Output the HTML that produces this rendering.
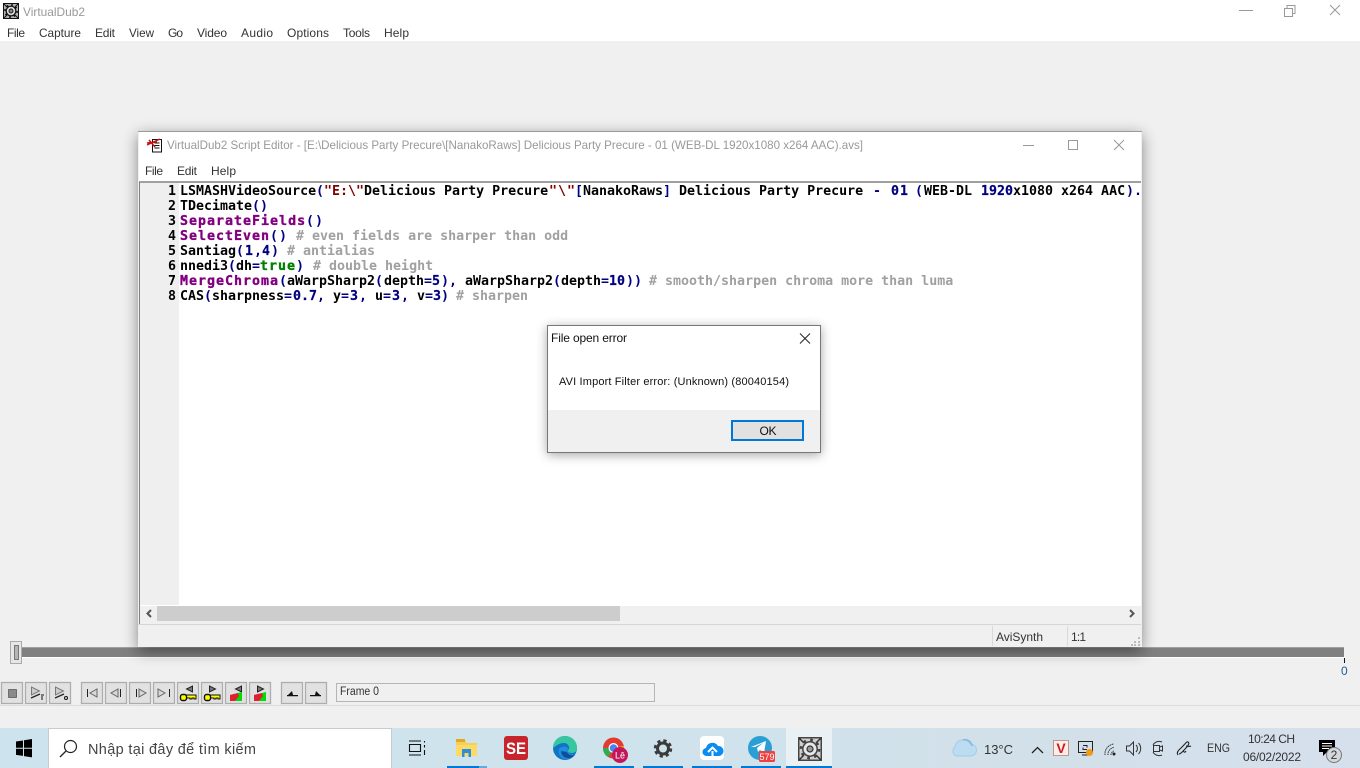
<!DOCTYPE html>
<html><head><meta charset="utf-8"><title>VirtualDub2</title>
<style>
html,body{margin:0;padding:0;width:1360px;height:768px;overflow:hidden;background:#f0f0f0}
.r{position:absolute;display:block}
svg{position:absolute;left:0;top:0}
text{font-family:"Liberation Sans","Noto Sans CJK SC",sans-serif;font-size:12px;fill:#333;white-space:pre}
.ti{fill:#999}
text.c{font-family:"DejaVu Sans Mono",monospace;font-size:13.3px;font-weight:bold;fill:#000}
.ln{font:bold 13.3px "DejaVu Sans Mono",monospace;fill:#000}
.n{fill:#000080}.s{fill:#800000}.g{fill:#a0a0a0}.t{fill:#008000}
.p{fill:#800080;stroke:#800080;stroke-width:.35px;letter-spacing:1px}
.d{fill:#000080;stroke:#000080;stroke-width:.2px}
.btn{fill:#e1e1e1;stroke:#adadad;stroke-width:1.3}
</style></head><body>
<div class="r" style="left:0;top:0;width:1360px;height:41px;background:#fff"></div>
<div class="r" style="left:22px;top:647px;width:1322px;height:10px;background:#808080;border-top:1px solid #a0a0a0;box-sizing:border-box"></div>
<div class="r" style="left:10px;top:657px;width:1335px;height:1px;background:#fff"></div>
<div class="r" style="left:138px;top:131px;width:1004px;height:516px;background:#f0f0f0;box-shadow:0 4px 14px rgba(0,0,0,.45)"></div>
<div class="r" style="left:139px;top:132px;width:1002px;height:49px;background:#fff"></div>
<div class="r" style="left:138px;top:131px;width:1004px;height:1px;background:#9a9a9a"></div>
<div class="r" style="left:139px;top:181px;width:1002px;height:2px;background:#a0a0a0"></div>
<div class="r" style="left:139px;top:182px;width:1px;height:442px;background:#808080"></div>
<div class="r" style="left:140px;top:183px;width:1001px;height:423px;background:#fff"></div>
<div class="r" style="left:140px;top:183px;width:39px;height:422px;background:#efefef"></div>
<div class="r" style="left:140px;top:606px;width:1001px;height:16px;background:#f0f0f0"></div>
<div class="r" style="left:157px;top:606px;width:463px;height:15px;background:#cdcdcd"></div>
<div class="r" style="left:138px;top:624px;width:1003px;height:1px;background:#d6d6d6"></div>
<div class="r" style="left:992px;top:626px;width:1px;height:20px;background:#d9d9d9"></div>
<div class="r" style="left:1067px;top:626px;width:1px;height:20px;background:#d9d9d9"></div>
<div class="r" style="left:0;top:705px;width:1360px;height:1px;background:#dcdcdc"></div>
<div class="r" style="left:547px;top:325px;width:274px;height:128px;box-sizing:border-box;border:1px solid #777;background:#fff;box-shadow:0 2px 10px rgba(0,0,0,.35)"></div>
<div class="r" style="left:548px;top:410px;width:272px;height:42px;background:#f0f0f0"></div>
<div class="r" style="left:731px;top:420px;width:73px;height:21px;box-sizing:border-box;border:2px solid #0078d7;background:#e1e1e1"></div>
<div class="r" style="left:0;top:728px;width:1360px;height:40px;background:linear-gradient(90deg,#cde4ee 0,#cfe3ec 45%,#d2e0ea 75%,#d6e0ec 100%)"></div>
<div class="r" style="left:49px;top:729px;width:342px;height:39px;background:#fff;box-shadow:0 0 0 1px #c4ccd2"></div>
<div class="r" style="left:786px;top:728px;width:46px;height:40px;background:#e9f1f5"></div>
<div class="r" style="left:447px;top:766px;width:32px;height:2px;background:#0078d7"></div>
<div class="r" style="left:479px;top:766px;width:8px;height:2px;background:#6aa7da"></div>
<div class="r" style="left:594px;top:766px;width:40px;height:2px;background:#0078d7"></div>
<div class="r" style="left:643px;top:766px;width:40px;height:2px;background:#0078d7"></div>
<div class="r" style="left:692px;top:766px;width:40px;height:2px;background:#0078d7"></div>
<div class="r" style="left:741px;top:766px;width:40px;height:2px;background:#0078d7"></div>
<div class="r" style="left:786px;top:766px;width:46px;height:2px;background:#0078d7"></div>

<svg width="1360" height="768" viewBox="0 0 1360 768">
<defs>
<clipPath id="ed"><rect x="180" y="183" width="961" height="120"/></clipPath>
<g id="gear"><rect x=".5" y=".5" width="15" height="15" fill="#cfcfcf" stroke="#444" stroke-width="1"/><path d="M1 1l3 3M15 1l-3 3M1 15l3-3M15 15l-3-3" stroke="#333" fill="none"/><circle cx="8" cy="8" r="6" fill="none" stroke="#444" stroke-width="1.800" stroke-dasharray="1.800 2.900"/><circle cx="8" cy="8" r="4.800" fill="#e8e8e8" stroke="#444" stroke-width="1"/><circle cx="8" cy="8" r="2" fill="#999" stroke="#333" stroke-width=".8"/></g>
<g id="gearb"><rect x=".5" y=".5" width="15" height="15" fill="#b0b0b0" stroke="#111" stroke-width="1"/><path d="M1 1l3 3M15 1l-3 3M1 15l3-3M15 15l-3-3" stroke="#111" fill="none"/><circle cx="8" cy="8" r="6" fill="none" stroke="#111" stroke-width="1.800" stroke-dasharray="1.800 2.900"/><circle cx="8" cy="8" r="4.800" fill="#ddd" stroke="#111" stroke-width="1.200"/><circle cx="8" cy="8" r="2" fill="#888" stroke="#111" stroke-width=".9"/></g>
</defs>

<!-- main titlebar -->
<use href="#gearb" x="3" y="3"/>
<text x="23" y="16" class="ti" textLength="62" lengthAdjust="spacingAndGlyphs">VirtualDub2</text>
<path d="M1239 10.500h14" stroke="#999" fill="none"/>
<path d="M1284.500 8.500h8v8h-8zM1287 8.500v-3h8v8h-2.500" stroke="#999" fill="none"/>
<path d="M1330 5l10 10M1340 5l-10 10" stroke="#999" fill="none"/>
<text x="7" y="37" textLength="18">File</text>
<text x="39" y="37" textLength="42" lengthAdjust="spacingAndGlyphs">Capture</text>
<text x="95" y="37" textLength="20">Edit</text>
<text x="129" y="37" textLength="25" lengthAdjust="spacingAndGlyphs">View</text>
<text x="168" y="37" textLength="15">Go</text>
<text x="197" y="37" textLength="30">Video</text>
<text x="241" y="37" textLength="32">Audio</text>
<text x="287" y="37" textLength="42">Options</text>
<text x="343" y="37" textLength="27">Tools</text>
<text x="384" y="37" textLength="25">Help</text>

<!-- script editor titlebar -->
<path d="M152.500 139.500h9v12.500h-9z" fill="#fff" stroke="#111"/><path d="M154.500 143h5M154.500 145.500h5M154.500 148h5" stroke="#111"/>
<path d="M147 145L160 139M149 140l6 7M147 143l10-1" stroke="#c81010" stroke-width="1.400" fill="none"/>
<text x="167" y="149" class="ti" textLength="696" lengthAdjust="spacingAndGlyphs">VirtualDub2 Script Editor - [E:\Delicious Party Precure\[NanakoRaws] Delicious Party Precure - 01 (WEB-DL 1920x1080 x264 AAC).avs]</text>
<path d="M1023 145.500h11" stroke="#999" fill="none"/>
<rect x="1068.500" y="140.500" width="9" height="9" fill="none" stroke="#999"/>
<path d="M1114 140l10 10M1124 140l-10 10" stroke="#999" fill="none"/>
<text x="145" y="175" textLength="18">File</text>
<text x="177" y="175" textLength="20">Edit</text>
<text x="211" y="175" textLength="25">Help</text>

<!-- code -->
<text text-anchor="end" x="176" y="195" class="ln">1</text>
<text text-anchor="end" x="176" y="210" class="ln">2</text>
<text text-anchor="end" x="176" y="225" class="ln">3</text>
<text text-anchor="end" x="176" y="240" class="ln">4</text>
<text text-anchor="end" x="176" y="255" class="ln">5</text>
<text text-anchor="end" x="176" y="270" class="ln">6</text>
<text text-anchor="end" x="176" y="285" class="ln">7</text>
<text text-anchor="end" x="176" y="300" class="ln">8</text>
<g clip-path="url(#ed)">
<text y="195" class="c"><tspan x="180">LSMASHVideoSource</tspan><tspan x="316" class="n">(</tspan><tspan x="324" class="s">"E:\"</tspan><tspan x="364">Delicious Party Precure</tspan><tspan x="549" class="s" letter-spacing="1">"\"</tspan><tspan x="575" class="n">[</tspan><tspan x="583">NanakoRaws</tspan><tspan x="663" class="n">]</tspan><tspan x="679">Delicious Party Precure</tspan><tspan x="873" class="n">-</tspan><tspan x="891" class="d" letter-spacing="1">01</tspan><tspan x="915" class="n">(</tspan><tspan x="924">WEB-DL</tspan><tspan x="981" class="d">1920</tspan><tspan x="1013">x1080 x264 AAC</tspan><tspan x="1126" class="n">).</tspan></text>
<text y="210" class="c"><tspan x="180">TDecimate</tspan><tspan x="252" class="n">()</tspan></text>
<text y="225" class="c"><tspan x="180" class="p">SeparateFields</tspan><tspan x="306" class="n" letter-spacing="1">()</tspan></text>
<text y="240" class="c"><tspan x="180" class="p">SelectEven</tspan><tspan x="270" class="n" letter-spacing="1">()</tspan><tspan x="296" class="g"># even fields are sharper than odd</tspan></text>
<text y="255" class="c"><tspan x="180">Santiag</tspan><tspan x="236" class="n">(</tspan><tspan x="245" class="d">1</tspan><tspan x="254" class="n">,</tspan><tspan x="262" class="d">4</tspan><tspan x="271" class="n">)</tspan><tspan x="287" class="g"># antialias</tspan></text>
<text y="270" class="c"><tspan x="180">nnedi3</tspan><tspan x="228" class="n">(</tspan><tspan x="236">dh</tspan><tspan x="252" class="n">=</tspan><tspan x="260" class="t" style="stroke:#008000;stroke-width:.35px" letter-spacing="1">true</tspan><tspan x="296" class="n">)</tspan><tspan x="313" class="g"># double height</tspan></text>
<text y="285" class="c"><tspan x="180" class="p">MergeChroma</tspan><tspan x="279" class="n">(</tspan><tspan x="287">aWarpSharp2</tspan><tspan x="375" class="n">(</tspan><tspan x="384">depth</tspan><tspan x="424" class="n">=</tspan><tspan x="432" class="d">5</tspan><tspan x="441" class="n">),</tspan><tspan x="465">aWarpSharp2</tspan><tspan x="553" class="n">(</tspan><tspan x="561">depth</tspan><tspan x="601" class="n">=</tspan><tspan x="609" class="d">10</tspan><tspan x="626" class="n">))</tspan><tspan x="649" class="g"># smooth/sharpen chroma more than luma</tspan></text>
<text y="300" class="c"><tspan x="180">CAS</tspan><tspan x="204" class="n">(</tspan><tspan x="212">sharpness</tspan><tspan x="284" class="n">=</tspan><tspan x="293" class="d">0.7</tspan><tspan x="317" class="n">,</tspan><tspan x="333">y</tspan><tspan x="341" class="n">=</tspan><tspan x="350" class="d">3</tspan><tspan x="359" class="n">,</tspan><tspan x="375">u</tspan><tspan x="383" class="n">=</tspan><tspan x="392" class="d">3</tspan><tspan x="401" class="n">,</tspan><tspan x="417">v</tspan><tspan x="425" class="n">=</tspan><tspan x="433" class="d">3</tspan><tspan x="441" class="n">)</tspan><tspan x="456" class="g"># sharpen</tspan></text>
</g>

<!-- scroll arrows, status -->
<path d="M151 610l-3.500 3.500 3.500 3.500" fill="none" stroke="#555" stroke-width="2"/>
<path d="M1130 610l3.500 3.500-3.500 3.500" fill="none" stroke="#555" stroke-width="2"/>
<text x="996" y="641" textLength="47">AviSynth</text>
<text x="1071" y="641" textLength="15">1:1</text>
<path d="M1138 637h2v2h-2zM1134 641h2v2h-2zM1138 641h2v2h-2zM1131 644h2v2h-2zM1134 644h2v2h-2zM1138 644h2v2h-2z" fill="#bbb"/>

<!-- dialog -->
<text x="551" y="342" style="fill:#111" textLength="76">File open error</text>
<path d="M800 333.500l10 10M810 333.500l-10 10" stroke="#222" fill="none"/>
<text x="559" y="385" style="fill:#111;font-size:11px" textLength="230">AVI Import Filter error: (Unknown) (80040154)</text>
<text x="759.500" y="435" style="fill:#111" textLength="17">OK</text>

<!-- slider -->
<rect x="10.500" y="641.500" width="11" height="22" fill="#e6e6e6" stroke="#aaa"/>
<rect x="14.500" y="645.500" width="4" height="14" fill="#b5b5b5" stroke="#777"/>
<path d="M1344.500 658v5" stroke="#111"/>
<text x="1341" y="675" textLength="7" style="fill:#1c5f9a">0</text>

<!-- toolbar -->
<g class="btn">
<rect x="1.500" y="682.500" width="21" height="21"/><rect x="25.500" y="682.500" width="21" height="21"/><rect x="49.500" y="682.500" width="21" height="21"/>
<rect x="81.500" y="682.500" width="21" height="21"/><rect x="105.500" y="682.500" width="21" height="21"/><rect x="129.500" y="682.500" width="21" height="21"/><rect x="153.500" y="682.500" width="21" height="21"/>
<rect x="177.500" y="682.500" width="21" height="21"/><rect x="201.500" y="682.500" width="21" height="21"/><rect x="225.500" y="682.500" width="21" height="21"/><rect x="249.500" y="682.500" width="21" height="21"/>
<rect x="281.500" y="682.500" width="21" height="21"/><rect x="305.500" y="682.500" width="21" height="21"/>
</g>
<rect x="8.500" y="689.500" width="8" height="8" fill="#8a8a8a" stroke="#222" stroke-dasharray="1 1"/>
<path d="M31.500 687v8l8-4z" fill="#ccc" stroke="#777"/><path d="M31 698l9-4" stroke="#222" stroke-width="1.300"/><path d="M42 696v4M41 695h3" stroke="#111"/>
<path d="M55.500 687v8l8-4z" fill="#ccc" stroke="#777"/><path d="M55 698l9-4" stroke="#222" stroke-width="1.300"/><circle cx="66" cy="698" r="1.500" fill="none" stroke="#111"/>
<path d="M87.500 689v8" stroke="#222" fill="none"/><path d="M97 689v8l-7-4z" fill="#d8d8d8" stroke="#666"/>
<path d="M118 689v8l-7-4z" fill="#d8d8d8" stroke="#666"/><path d="M120.500 689v8" stroke="#222"/>
<path d="M136.500 689v8" stroke="#222"/><path d="M139 689v8l7-4z" fill="#d8d8d8" stroke="#666"/>
<path d="M158 689v8l7-4z" fill="#d8d8d8" stroke="#666"/><path d="M169.500 689v8" stroke="#222"/>
<!-- key buttons -->
<path d="M192.500 686v6l-6-3z" fill="#777" stroke="#222"/>
<path d="M184 695h12v4h-2v-1h-2v1h-2v-1h-5z" fill="#ff0" stroke="#111"/><rect x="180.500" y="694.500" width="6" height="6" rx="2" fill="#ff0" stroke="#111" stroke-width="1.400"/>
<path d="M209.500 686v6l6-3z" fill="#777" stroke="#222"/>
<path d="M208 695h12v4h-2v-1h-2v1h-2v-1h-5z" fill="#ff0" stroke="#111"/><rect x="204.500" y="694.500" width="6" height="6" rx="2" fill="#ff0" stroke="#111" stroke-width="1.400"/>
<path d="M241.500 686v6l-6-3z" fill="#777" stroke="#222"/><path d="M230 701v-6l12-3v9z" fill="#0d0"/><path d="M230 701v-6l8-2 1 3-4 5z" fill="#e02030"/>
<path d="M257.500 686v6l6-3z" fill="#777" stroke="#222"/><path d="M254 701v-6l12-3v9z" fill="#0d0"/><path d="M254 701v-6l8-2 1 3-4 5z" fill="#e02030"/>
<path d="M287 695h11v1.300h-11zM292 691l-4 4h5z" fill="#111"/>
<path d="M310 695h11v1.300h-11zM316 691l4 4h-5z" fill="#111"/>
<rect x="336.500" y="683.500" width="318" height="18" fill="#f0f0f0" stroke="#b5b5b5"/>
<text x="340" y="695" textLength="39" lengthAdjust="spacingAndGlyphs" style="font-size:11.500px">Frame 0</text>

<!-- taskbar left -->
<path d="M16 741.500l7-1v7.200h-7zM24 740.300l8-1.300v8.700h-8zM16 748.700h7v7.200l-7-1zM24 748.700h8v8.700l-8-1.300z" fill="#000"/>
<circle cx="70.500" cy="746.500" r="6" fill="none" stroke="#222" stroke-width="1.200"/><path d="M66 751l-6 6" stroke="#222" stroke-width="1.300"/>
<text x="88" y="754" textLength="168" style="font-size:14.500px;fill:#444">Nhập tại đây để tìm kiếm</text>
<path d="M409 741h12M409 755h12M409.500 744.500h11v7h-11zM424.500 741v1.500M424.500 745v2.500M424.500 750v5" fill="none" stroke="#111" stroke-width="1.100"/>
<!-- explorer -->
<path d="M456 741h9l2 2h10v13h-21z" fill="#f6cf57"/><path d="M456 745h21v11h-21z" fill="#ffd966"/><path d="M456 739h9v3h-9z" fill="#e2a82a"/><path d="M462 749h9v8h-2.500v-4h-4v4h-2.500z" fill="#2b8fd9"/>
<!-- SE -->
<rect x="504" y="736" width="24" height="24" rx="3" fill="#c8242b"/>
<text x="516" y="754" text-anchor="middle" textLength="20" lengthAdjust="spacingAndGlyphs" style="fill:#fff;font:bold 17px 'Liberation Sans',sans-serif">SE</text>
<!-- edge -->
<circle cx="565" cy="748" r="12" fill="#1173c8"/>
<path d="M553 748a12 12 0 0 1 24 0c0 4-3 5-5 5-4 0-5-2-3-4 1-2-1-6-5-6-6 0-9 4-11 5z" fill="#37c7a0"/>
<path d="M559 749c2-3 9-3 9 0-1 3 2 6 6 5-3 5-9 6-12 4-3-2-4-6-3-9z" fill="#1f8fdc"/>
<path d="M561 751c0 4 3 7 7 7 3 0 5-1 7-3-3 1-7 0-8-3z" fill="#0e4f9c"/>
<!-- chrome -->
<circle cx="613.500" cy="748" r="10.500" fill="#e33b2e"/><path d="M603 748a10.500 10.500 0 0 0 5 9l6-9z" fill="#34a853"/><path d="M613.500 748l10-2a10.500 10.500 0 0 1-5 11z" fill="#fbbc04"/><circle cx="613.500" cy="748" r="5" fill="#fff"/><circle cx="613.500" cy="748" r="3.800" fill="#4285f4"/>
<circle cx="620" cy="755" r="8" fill="#c2185b"/>
<text x="620" y="758.500" text-anchor="middle" style="fill:#fff;font-size:9px">Lê</text>
<!-- settings -->
<circle cx="663" cy="748.500" r="5.500" fill="none" stroke="#3a3a3a" stroke-width="3"/>
<circle cx="663" cy="748.500" r="8" fill="none" stroke="#3a3a3a" stroke-width="2.400" stroke-dasharray="3.300 3"/>
<!-- cloud upload -->
<rect x="700" y="736" width="24" height="24" rx="4" fill="#fff"/>
<path d="M707 756a4 4 0 0 1-1-8 6.500 6.500 0 0 1 12-2 5 5 0 0 1 1 10z" fill="#0a8cf0"/>
<path d="M712.500 757v-6M708 752l4.500-4.500 4.500 4.500" fill="none" stroke="#fff" stroke-width="2"/>
<!-- telegram -->
<circle cx="760" cy="748" r="12" fill="#2a9fd6"/>
<path d="M751 747l15-6-2 12-4-3-2 2-1-4 6-5-8 4z" fill="#fff"/>
<rect x="759" y="751" width="16" height="11" rx="1.500" fill="#f04040"/>
<text x="767" y="760" text-anchor="middle" style="fill:#fff;font-size:9px">579</text>
<!-- VD -->
<use href="#gear" transform="translate(798,737) scale(1.500)"/>

<!-- tray -->
<path d="M957 756a5 5 0 0 1-2-9 8 8 0 0 1 15-3 6 6 0 0 1 1 12z" fill="#bcdcf2" stroke="#a4cde8"/><path d="M963 740a7 7 0 0 1 9 6" fill="none" stroke="#7fb8e0" stroke-width="1.500"/>
<text x="984" y="754" textLength="29" style="font-size:13px">13°C</text>
<path d="M1032 753l5.500-5.500 5.500 5.500" fill="none" stroke="#222" stroke-width="1.300"/>
<rect x="1053.500" y="740.500" width="15" height="15" fill="#fdecea" stroke="#b98"/>
<text x="1061" y="753" text-anchor="middle" style="fill:#c81e1e;font:bold 14px 'Liberation Sans',sans-serif">V</text>
<path d="M1078.500 741.500h14v11h-14zM1083 745.500h4v2M1087 749.500h-4v-2M1082 755h7" fill="none" stroke="#222"/>
<circle cx="1089.500" cy="752.500" r="3.500" fill="#f59a10"/>
<path d="M1105 755a10 10 0 0 1 9-11M1108 755a7 7 0 0 1 6-7.500M1111 755a4 4 0 0 1 3-4" fill="none" stroke="#333" stroke-dasharray="1.500 .7"/><circle cx="1114" cy="754" r="1.500" fill="#222"/>
<path d="M1126.500 746h3l4-4v13l-4-4h-3zM1136 745a5 5 0 0 1 0 7M1138.500 743a8 8 0 0 1 0 11" fill="none" stroke="#333"/>
<path d="M1153 745a7 7 0 0 1 9-3M1153 752a7 7 0 0 0 9 3M1153.500 745.500v6h6v-6zM1159.500 747l3-1v5l-3-1" fill="none" stroke="#333"/>
<path d="M1178 755c-2-3 1-5 4-8 3-3 5-6 6-5 2 1 0 4-3 7-2 2-4 5-6 5M1186 746c2 0 3 1 5 0M1183 751c1 1 2 2 3 0" fill="none" stroke="#222" stroke-width="1.100"/>
<text x="1207" y="752" textLength="23" lengthAdjust="spacingAndGlyphs">ENG</text>
<text x="1248" y="743" textLength="47">10:24 CH</text>
<text x="1243" y="761" textLength="58">06/02/2022</text>
<path d="M1319 740h16v12h-8l-4 4v-4h-4z" fill="#000"/><path d="M1322 743.500h10M1322 746h10M1322 748.500h7" stroke="#fff"/>
<circle cx="1334" cy="755" r="7.500" fill="#d4d8da" stroke="#777"/>
<text x="1334" y="759" text-anchor="middle">2</text>
</svg>
</body></html>
